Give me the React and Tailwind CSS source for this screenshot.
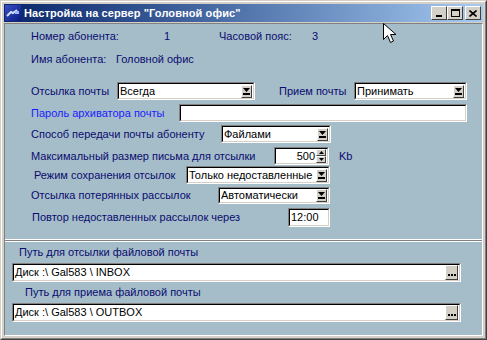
const navy = 'text-[#0b0b70]'

const DownArrow = () => (
  <svg width="7" height="7" viewBox="0 0 7 7">
    <path d="M0 0h7L3.5 4z" fill="#000" />
    <rect x="0" y="5" width="7" height="2" fill="#000" />
  </svg>
)

const SmallButton = ({ children, className = '' }) => (
  <div
    className={`flex items-center justify-center bg-[#d4d0c8] border border-t-white border-l-white border-b-[#404040] border-r-[#404040] ${className}`}
  >
    {children}
  </div>
)

const Sunken = ({ className = '', children }) => (
  <div className={`border border-t-[#808080] border-l-[#808080] border-b-white border-r-white ${className}`}>
    <div className="flex h-full items-center bg-white border border-t-black border-l-black border-b-[#d4d0c8] border-r-[#d4d0c8]">
      {children}
    </div>
  </div>
)

const Combo = ({ value, className = '' }) => (
  <Sunken className={className}>
    <span className="flex-1 pl-[1px] text-[11px] text-black leading-none whitespace-nowrap overflow-hidden">{value}</span>
    <SmallButton className="w-[11px] h-[13px] mr-[1px]">
      <DownArrow />
    </SmallButton>
  </Sunken>
)

const Label = ({ children, className = '' }) => (
  <span className={`text-[11px] leading-none whitespace-nowrap ${navy} ${className}`}>{children}</span>
)

const PathField = ({ value }) => (
  <Sunken className="ml-[7px] w-[449px] h-[19px]">
    <span className="flex-1 pl-[1px] text-[11px] text-black leading-none whitespace-nowrap">{value}</span>
    <SmallButton className="w-[13px] h-[15px] mr-[1px] items-end pb-[3px] gap-[1px]">
      <div className="w-[2px] h-[2px] bg-black" />
      <div className="w-[2px] h-[2px] bg-black" />
      <div className="w-[2px] h-[2px] bg-black" />
    </SmallButton>
  </Sunken>
)

const Cursor = () => (
  <svg className="absolute left-[382px] top-[22px]" width="14" height="22" viewBox="0 0 14 22">
    <path
      d="M0.5 0.5v16l4-4 3 7 3-1.5-3-6.5h5.5z"
      fill="#fff"
      stroke="#000"
      strokeWidth="1"
      strokeLinejoin="miter"
    />
  </svg>
)

export default function App() {
  return (
    <div className="relative w-[487px] h-[340px] bg-[#d4d0c8] font-['Liberation_Sans',Arial,sans-serif] border border-t-[#d4d0c8] border-l-[#d4d0c8] border-b-[#404040] border-r-[#404040]">
      <div className="h-full border border-t-white border-l-white border-b-[#808080] border-r-[#808080] p-[2px] flex flex-col">
        {/* title bar */}
        <div className="h-[18px] flex items-center bg-gradient-to-r from-[#0a246a] to-[#a6caf0] pl-[1px] pr-[2px]">
          <div className="w-[16px] h-[16px] bg-gradient-to-br from-[#3a4ec8] to-[#0a1a80] flex items-center justify-center">
            <svg width="14" height="10" viewBox="0 0 14 10">
              <path d="M1 8l4-4 2 1 4-3" stroke="#cfe0ff" strokeWidth="2" fill="none" />
              <rect x="9" y="3" width="4" height="3" fill="#9ab8ff" />
            </svg>
          </div>
          <span className="ml-[3px] text-[11px] font-bold text-white leading-none whitespace-nowrap tracking-[0.1px]">
            Настройка на сервер "Головной офис"
          </span>
          <div className="ml-auto flex items-center">
            <SmallButton className="w-[16px] h-[14px] items-end pb-[2px]">
              <div className="w-[6px] h-[2px] bg-black" />
            </SmallButton>
            <SmallButton className="w-[16px] h-[14px]">
              <div className="w-[9px] h-[8px] border border-black border-t-2" />
            </SmallButton>
            <SmallButton className="w-[16px] h-[14px] ml-[2px]">
              <svg width="8" height="7" viewBox="0 0 8 7">
                <path d="M0.5 0.5l7 6M7.5 0.5l-7 6" stroke="#000" strokeWidth="1.6" />
              </svg>
            </SmallButton>
          </div>
        </div>

        {/* body */}
        <div className="flex-1 mt-[1px] flex flex-col bg-[#a4bdc8] border border-t-[#808080] border-l-[#808080] border-b-white border-r-white">
          {/* top panel */}
          <div className="h-[216px] flex flex-col border-b border-b-white shadow-[0_1px_0_#808080] pl-[26px]">
            <div className="h-[14px] mt-[5px] flex items-center">
              <Label className="w-[133px]">Номер абонента:</Label>
              <Label className="w-[55px]">1</Label>
              <Label className="w-[93px]">Часовой пояс:</Label>
              <Label>3</Label>
            </div>
            <div className="h-[14px] mt-[9px] flex items-center">
              <Label className="w-[85px]">Имя абонента:</Label>
              <Label>Головной офис</Label>
            </div>
            <div className="h-[18px] mt-[16px] flex items-center">
              <Label className="w-[86px]">Отсылка почты</Label>
              <Combo value="Всегда" className="w-[138px] h-[18px]" />
              <Label className="ml-[24px] w-[75px]">Прием почты</Label>
              <Combo value="Принимать" className="w-[113px] h-[18px]" />
            </div>
            <div className="h-[18px] mt-[4px] flex items-center">
              <Label className="w-[148px] !text-[#1c1cff]">Пароль архиватора почты</Label>
              <Sunken className="w-[288px] h-[18px]" />
            </div>
            <div className="h-[18px] mt-[3px] flex items-center">
              <Label className="w-[190px]">Способ передачи почты абоненту</Label>
              <Combo value="Файлами" className="w-[110px] h-[18px]" />
            </div>
            <div className="h-[18px] mt-[4px] flex items-center">
              <Label className="w-[243px]">Максимальный размер письма для отсылки</Label>
              <Sunken className="w-[55px] h-[18px]">
                <span className="flex-1 text-right pr-[1px] text-[11px] text-black leading-none">500</span>
                <div className="flex flex-col mr-[1px]">
                  <SmallButton className="w-[10px] h-[7px]">
                    <svg width="5" height="3" viewBox="0 0 5 3"><path d="M2.5 0L5 3H0z" fill="#000" /></svg>
                  </SmallButton>
                  <SmallButton className="w-[10px] h-[7px]">
                    <svg width="5" height="3" viewBox="0 0 5 3"><path d="M0 0h5L2.5 3z" fill="#000" /></svg>
                  </SmallButton>
                </div>
              </Sunken>
              <Label className="ml-[10px]">Kb</Label>
            </div>
            <div className="h-[18px] mt-[1px] flex items-center">
              <Label className="ml-[3px] w-[152px]">Режим сохранения отсылок</Label>
              <Combo value="Только недоставленные" className="w-[144px] h-[18px]" />
            </div>
            <div className="h-[17px] mt-[3px] flex items-center">
              <Label className="w-[187px]">Отсылка потерянных рассылок</Label>
              <Combo value="Автоматически" className="w-[112px] h-[17px]" />
            </div>
            <div className="h-[19px] mt-[4px] flex items-center">
              <Label className="ml-[1px] w-[256px]">Повтор недоставленных рассылок через</Label>
              <Sunken className="w-[42px] h-[19px]">
                <span className="pl-[1px] text-[11px] text-black leading-none">12:00</span>
              </Sunken>
            </div>
          </div>

          {/* bottom panel */}
          <div className="flex-1 flex flex-col border-t border-t-[#808080] shadow-[inset_0_1px_0_#fff]">
            <div className="h-[14px] mt-[4px] flex items-center pl-[14px]">
              <Label>Путь для отсылки файловой почты</Label>
            </div>
            <div className="mt-[4px]">
              <PathField value="Диск :\ Gal583 \ INBOX" />
            </div>
            <div className="h-[14px] mt-[3px] flex items-center pl-[20px]">
              <Label>Путь для приема файловой почты</Label>
            </div>
            <div className="mt-[4px]">
              <PathField value="Диск :\ Gal583 \ OUTBOX" />
            </div>
          </div>
        </div>
      </div>
      <Cursor />
    </div>
  )
}
